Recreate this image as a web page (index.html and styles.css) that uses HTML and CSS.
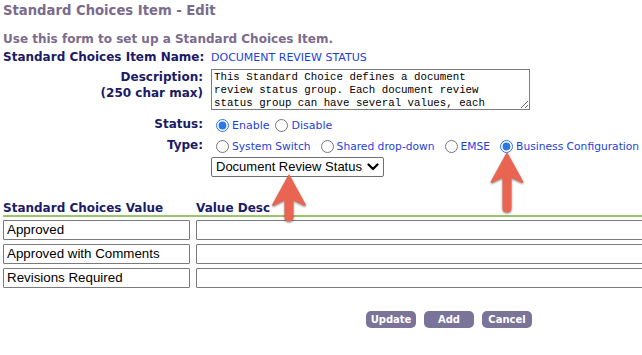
FILE: index.html
```html
<!DOCTYPE html>
<html lang="en">
<head>
<meta charset="utf-8">
<title>Standard Choices Item - Edit</title>
<link rel="stylesheet" href="styles.css">
</head>
<body>
<h1 class="title">Standard Choices Item - Edit</h1>
<p class="intro">Use this form to set up a Standard Choices Item.</p>

<div class="row row-name">
  <div class="lbl">Standard Choices Item Name:</div>
  <div class="name-val">DOCUMENT REVIEW STATUS</div>
</div>
<div class="row row-desc">
  <div class="lbl lbl-desc">Description:<br>(250 char max)</div>
  <div><textarea class="desc">This Standard Choice defines a document
review status group. Each document review
status group can have several values, each
representing a review status.</textarea></div>
</div>
<div class="row row-status">
  <div class="lbl">Status:</div>
  <div class="radios radios-status">
    <label class="opt"><input type="radio" name="status" checked>Enable</label>
    <label class="opt"><input type="radio" name="status">Disable</label>
  </div>
</div>
<div class="row row-type">
  <div class="lbl">Type:</div>
  <div class="radios radios-type">
    <label class="opt"><input type="radio" name="type">System Switch</label>
    <label class="opt"><input type="radio" name="type">Shared drop-down</label>
    <label class="opt"><input type="radio" name="type">EMSE</label>
    <label class="opt"><input type="radio" name="type" checked>Business Configuration</label>
  </div>
</div>
<div class="row row-select">
  <div></div>
  <div>
    <span class="select-wrap">
      <select class="sel"><option>Document Review Status</option></select>
      <svg class="chev" width="12" height="8" viewBox="0 0 12 8"><polyline points="1.5,1.5 6,6 10.5,1.5" fill="none" stroke="#000" stroke-width="2.2" stroke-linecap="round" stroke-linejoin="round"/></svg>
    </span>
  </div>
</div>

<div class="values">
  <div class="vhead"><span>Standard Choices Value</span><span>Value Desc</span></div>
  <div class="vrow"><input class="inp" type="text" value="Approved"><input class="inp" type="text" value=""></div>
  <div class="vrow"><input class="inp" type="text" value="Approved with Comments"><input class="inp" type="text" value=""></div>
  <div class="vrow"><input class="inp" type="text" value="Revisions Required"><input class="inp" type="text" value=""></div>
</div>

<div class="buttons">
  <button class="btn" type="button">Update</button>
  <button class="btn" type="button">Add</button>
  <button class="btn" type="button">Cancel</button>
</div>

<svg class="arrow arrow-1" width="40" height="54" viewBox="0 0 40 54">
  <path d="M20 2 L36.5 32 Q37.5 34.5 35 33.8 L24.5 28.5 L24.5 45 Q24.5 49.5 20 49.5 Q15.5 49.5 15.5 45 L15.5 28.5 L5 33.8 Q2.5 34.5 3.5 32 Z" fill="#ea6452"/>
</svg>
<svg class="arrow arrow-2" width="40" height="68" viewBox="0 0 40 68">
  <path d="M20 2 L36 31 Q37 33.5 34.5 32.8 L24.5 28 L24.5 58 Q24.5 62.5 20 62.5 Q15.5 62.5 15.5 58 L15.5 28 L5.5 32.8 Q3 33.5 4 31 Z" fill="#ea6452"/>
</svg>
</body>
</html>
```
FILE: styles.css
```css
html {
  overflow: hidden;
  background: #fff;
}
body {
  margin: 0;
  padding: 3px 0 0 3px;
  position: relative;
  width: 700px;
  height: 352px;
  font-family: "DejaVu Sans", Verdana, sans-serif;
  background: #fff;
}
.title {
  margin: 0;
  font-size: 13.2px;
  line-height: 16px;
  font-weight: bold;
  color: #7b6b8d;
}
.intro {
  margin: 13px 0 0;
  font-size: 12px;
  line-height: 15px;
  font-weight: bold;
  color: #7b6b8d;
}
.row {
  display: grid;
  grid-template-columns: 200px 1fr;
  column-gap: 8px;
}
.lbl {
  text-align: right;
  font-weight: bold;
  font-size: 12px;
  line-height: 15px;
  color: #1a1a66;
  white-space: nowrap;
}
.row-name { margin-top: 3px; }
.name-val {
  font-size: 11px;
  line-height: 15px;
  color: #1e3fdc;
}
.row-desc { margin-top: 4px; }
.lbl-desc { line-height: 16px; }
.desc {
  display: block;
  box-sizing: border-box;
  width: 319px;
  height: 41px;
  margin: 0;
  border: 1px solid #7d7d7d;
  padding: 1px 2px;
  font-family: "Liberation Mono", "DejaVu Sans Mono", monospace;
  font-size: 10.75px;
  line-height: 13px;
  color: #000;
  overflow: hidden;
  resize: both;
  white-space: pre;
}
.row-status { margin-top: 7px; }
.row-type { margin-top: 5px; }
.row-status .lbl, .row-type .lbl { line-height: 14px; }
.radios {
  display: flex;
  align-items: center;
  height: 16px;
}
.opt {
  display: inline-flex;
  align-items: center;
  font-size: 11px;
  color: #1e3fdc;
  white-space: nowrap;
}
.radios-type .opt { font-size: 10.7px; }
.opt input {
  width: 13px;
  height: 13px;
  margin: 0 3px 0 5px;
  accent-color: #2a78e4;
}
.radios-status .opt + .opt { margin-left: 1px; }
.radios-type .opt + .opt { margin-left: 5px; }
.row-select { margin-top: 2px; }
.select-wrap {
  position: relative;
  display: inline-block;
}
.sel {
  display: block;
  box-sizing: border-box;
  width: 173px;
  height: 20px;
  margin: 0;
  padding: 0 16px 0 4px;
  border: 1px solid #6f6f6f;
  border-radius: 2px;
  background: #fff;
  -webkit-appearance: none;
  appearance: none;
  font-family: "Liberation Sans", Arial, sans-serif;
  font-size: 13px;
  color: #000;
}
.chev {
  position: absolute;
  right: 5px;
  top: 6px;
  pointer-events: none;
}
.values { margin-top: 24px; width: 700px; }
.vhead {
  display: grid;
  grid-template-columns: 187px 1fr;
  column-gap: 6px;
  font-size: 12px;
  line-height: 14px;
  font-weight: bold;
  color: #1a1a66;
  border-bottom: 2px solid #9cc46b;
}
.vrow {
  display: grid;
  grid-template-columns: 187px 1fr;
  column-gap: 6px;
  margin-top: 4px;
}
.vhead + .vrow { margin-top: 3px; }
.inp {
  box-sizing: border-box;
  height: 20px;
  margin: 0;
  padding: 0 3px;
  border: 1px solid #7a7a7a;
  border-radius: 1px;
  font-family: "Liberation Sans", Arial, sans-serif;
  font-size: 13.33px;
  color: #000;
  background: #fff;
  width: 100%;
}
.buttons {
  display: flex;
  gap: 8px;
  margin: 23px 0 0 363px;
}
.btn {
  width: 50px;
  height: 17px;
  padding: 0;
  border: 0;
  border-radius: 5px;
  background: #7b7499;
  color: #fff;
  font-family: "DejaVu Sans", Verdana, sans-serif;
  font-weight: bold;
  font-size: 10px;
  line-height: 17px;
}
.arrow {
  position: absolute;
  filter: drop-shadow(0 1px 1.2px rgba(0, 0, 0, 0.45));
}
.arrow-1 { left: 269px; top: 172px; }
.arrow-2 { left: 487px; top: 150px; }
```
